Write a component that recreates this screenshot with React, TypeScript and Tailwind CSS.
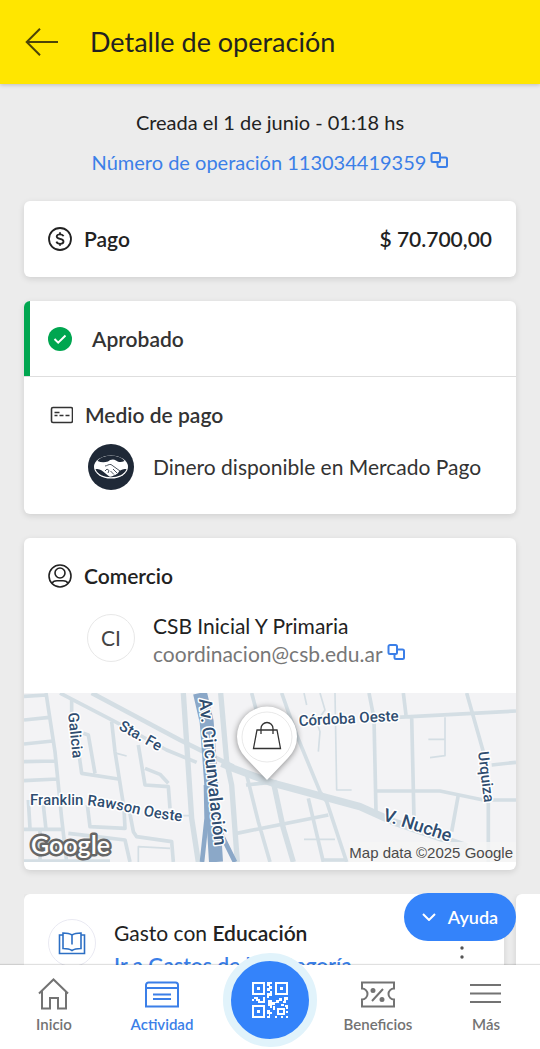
import type { ReactNode } from "react";

const copyIcon = (
  <svg viewBox="0 0 18 16" className="h-4 w-[18px]" fill="none" stroke="currentColor" strokeWidth="2">
    <path d="M7 10H3a1.500 1.500 0 0 1-1.500-1.500V2.500A1.500 1.500 0 0 1 3 1h5.500a1.500 1.500 0 0 1 1.500 1.500V8.500A1.500 1.500 0 0 1 8.500 10Z" />
    <path d="M11 5.500H15.500a1.500 1.500 0 0 1 1.500 1.500V13.500a1.500 1.500 0 0 1-1.500 1.500H9A1.500 1.500 0 0 1 7.500 13.500V10" />
  </svg>
);

function Card({ children, className = "" }: { children?: ReactNode; className?: string }) {
  return (
    <section className={`overflow-hidden rounded-md bg-white shadow-[0_2px_6px_rgba(0,0,0,0.12)] ${className}`}>
      {children}
    </section>
  );
}

function StreetMap() {
  return (
    <svg viewBox="24 8 492 169" className="block w-full" role="img" aria-label="Mapa del comercio">
      <defs>
        <path id="franklin" d="M30 120 L84 120 Q108 122 132 128 Q155 134 190 137" />
      </defs>
      <rect x="24" y="8" width="492" height="169" fill="#f3f3f5" />

      <g transform="scale(0.33333)" fill="none" stroke="#d4dee4" strokeWidth="11" strokeLinejoin="round">
        {/* west blocks */}
        <path d="M138 24L165 200L185 400L200 531M72 34L140 30M72 105L148 97M72 177L158 168M72 230L165 228M72 287L172 282M72 433L190 433" />
        <path d="M85 345L90 430M130 360L138 433M120 433V531M72 528H330M215 45V100M238 215L245 265L355 282M250 145L265 150L285 265" />
        <path d="M335 110L345 200L372 370L375 430L270 425L262 360M415 180L435 300L505 305L510 370M435 250L480 268L505 295" />
        <path d="M385 360L400 440L410 455L515 470L520 531M290 455L375 465L390 531M205 445L290 455" />
        <path d="M350 205L380 213M415 531V485L510 490M540 392H575M912 463H1005" strokeWidth="5" />
        {/* avenues */}
        <path d="M180 24L345 110L500 195L590 232" />
        <path d="M275 24L540 165L640 215L700 245" strokeWidth="14" />
        <path d="M665 235L700 250L820 295L1080 365L1180 410L1400 485" strokeWidth="22" />
        <path d="M550 24L575 400L595 531M662 24L680 230L695 300L712 531" strokeWidth="16" />
        {/* centre and east */}
        <path d="M755 24L770 80M845 24L870 95L890 150L960 320L980 350L1040 531M740 270L775 410L810 531M738 300L830 290M710 445L985 390M925 340L970 531M970 525H1040" />
        <path d="M822 300L850 430L880 531" strokeWidth="16" />
        <path d="M912 24L920 60M960 24L975 75L950 110L960 140L955 200M1005 24L1010 315H1055M1335 97V212L1290 218M1285 163H1335" strokeWidth="5" />
        <path d="M1190 97L1548 78M1107 24L1122 100L1128 380M1210 24L1218 90M1235 95L1242 400M1130 318H1320L1450 345L1548 345" />
        <path d="M1400 24L1450 200M1465 350V531M1475 240L1548 232M1375 330L1355 440" />
        {/* motorway */}
        <path d="M600 24L620 110L634 300L648 531" stroke="#8ba8c8" strokeWidth="42" />
        <path d="M618 300L620 400L606 531M650 380L665 450L705 531" stroke="#8ba8c8" strokeWidth="14" />
      </g>

      <g
        className="font-['Roboto',sans-serif] font-medium"
        fill="#2f4d70"
        stroke="#ffffff"
        strokeWidth="3"
        strokeLinejoin="round"
        paintOrder="stroke"
        fontSize="15"
      >
        <text transform="translate(68 28) rotate(84)">Galicia</text>
        <text transform="translate(118 44) rotate(29)">Sta. Fe</text>
        <text>
          <textPath href="#franklin">Franklin Rawson Oeste</textPath>
        </text>
        <text transform="translate(299 41) rotate(-3)">Córdoba Oeste</text>
        <text transform="translate(478 67) rotate(83)">Urquiza</text>
        <text transform="translate(382 135) rotate(18)" fontSize="18">V. Nuche</text>
        <text transform="translate(199 14) rotate(84)" fontSize="18">Av. Circunvalación</text>
      </g>

      <rect x="349" y="157" width="167" height="20" fill="#f5f5f5" fillOpacity="0.8" />
      <text x="513" y="173" textAnchor="end" fontSize="15" fill="#4a4a4a" className="font-['Liberation_Sans',sans-serif]">
        Map data ©2025 Google
      </text>
      <text
        x="31"
        y="169"
        fontSize="25"
        fill="#fff"
        stroke="#666"
        strokeWidth="5"
        strokeLinejoin="round"
        paintOrder="stroke"
        className="font-['Lato',sans-serif] font-semibold"
      >
        Google
      </text>

      {/* pin */}
      <path
        d="M267 95L246 73A30 30 0 1 1 288 73Z"
        fill="#fff"
        className="drop-shadow-[0_1px_3px_rgba(0,0,0,0.45)]"
      />
      <circle cx="267" cy="52" r="25" fill="none" stroke="#e9e9e9" />
      <path
        d="M257 45H277L280.500 63.500H253.500ZM261 49V43.500a6 6 0 0 1 12 0V49"
        fill="none"
        stroke="#333"
        strokeWidth="1.300"
      />
    </svg>
  );
}

function NavItem({ label, active, children }: { label: string; active?: boolean; children: ReactNode }) {
  return (
    <a
      href="#"
      className={`flex flex-1 flex-col items-center gap-[3px] pt-3 text-[15px] leading-5 font-semibold ${active ? "text-[#3b7fe8]" : "text-[#737373]"}`}
    >
      <svg viewBox="0 0 36 34" className="h-[34px] w-9" fill="none" stroke="currentColor" strokeWidth="2">
        {children}
      </svg>
      {label}
    </a>
  );
}

export default function App() {
  return (
    <div className="flex h-dvh flex-col bg-[#ececec] font-['Lato',sans-serif] text-[21px] leading-6 text-[#222]">
      <header className="z-10 flex h-[84px] shrink-0 items-center gap-8 bg-[#ffe600] px-6 shadow-[0_1px_4px_rgba(0,0,0,0.2)]">
        <button type="button" aria-label="Volver" className="text-[#4d4507]">
          <svg viewBox="0 0 34 28" className="h-7 w-[34px]" fill="none" stroke="currentColor" strokeWidth="2">
            <path d="M34 14H3M16 .7L2.700 14L16 27.300" />
          </svg>
        </button>
        <h1 className="text-[27px] leading-8">Detalle de operación</h1>
      </header>

      <div className="relative min-h-0 flex-1">
        <main className="flex h-full flex-col gap-6 overflow-x-hidden overflow-y-auto px-6 pt-[26px] [scrollbar-width:none] *:shrink-0">
          <div className="flex flex-col items-center gap-4 pb-[3px] text-xl leading-6">
            <p>Creada el 1 de junio - 01:18 hs</p>
            <a href="#" className="flex gap-1 text-[#3b7fe8]">
              Número de operación 113034419359
              <span className="pt-0.5">{copyIcon}</span>
            </a>
          </div>

          <Card className="flex h-[76px] items-center justify-between px-6 font-semibold">
            <h2 className="flex items-center gap-3">
              <svg viewBox="0 0 24 24" className="size-6" fill="none" stroke="currentColor" strokeWidth="1.800">
                <circle cx="12" cy="12" r="11" />
                <path d="M15.500 9.300C15 8 13.800 7.300 12 7.300c-2 0-3.300.9-3.300 2.300 0 3.200 6.800 1.500 6.800 4.900 0 1.400-1.400 2.300-3.400 2.300-1.900 0-3.200-.8-3.700-2.200M12 5.300v2M12 16.700v2" />
              </svg>
              Pago
            </h2>
            <p>$ 70.700,00</p>
          </Card>

          <Card>
            <div className="flex h-[76px] items-center gap-5 border-b border-[#dedede] pl-6 shadow-[inset_6px_0_0_#00a650]">
              <svg viewBox="0 0 24 24" className="size-6" fill="none">
                <circle cx="12" cy="12" r="12" fill="#00a650" />
                <path d="M6.500 12l3.700 3.700L17.500 8.500" stroke="#fff" strokeWidth="2" />
              </svg>
              <p className="font-semibold text-[#333]">Aprobado</p>
            </div>
            <div className="px-6 pt-[26px] pb-6 text-[#333]">
              <h2 className="flex items-center gap-3 font-semibold">
                <svg viewBox="0 0 25 24" className="h-6 w-[25px]" fill="none" stroke="currentColor" strokeWidth="1.600">
                  <rect x="3.500" y="4.500" width="21" height="15" rx="1.500" />
                  <path d="M6.500 9.500h5M6.500 12.500h3M11.500 12.500h4M17.500 12.500h4" />
                </svg>
                Medio de pago
              </h2>
              <div className="flex items-center gap-[19px] pt-[17px] pl-10">
                <svg viewBox="0 0 46 46" className="size-[46px]">
                  <circle cx="23" cy="23" r="23" fill="#1f2937" />
                  <ellipse cx="23" cy="23" rx="17" ry="11.500" fill="#fff" />
                  <path d="M9.500 17C14 10 32 10 36.500 17C33 18.500 31 18.500 28 16.500C25 14.500 22 16 20 17.500C16 18.800 13 18.500 9.500 17Z" fill="#1f2937" />
                  <path d="M7.500 25C10 25 13 25.500 15 27.500L20 31.500C22 33.500 24 32.500 25.500 31.500C28 31 30 29.500 31 27.500C33 25.500 36 25 38.500 25C35 36 11 36 7.500 25Z" fill="#1f2937" />
                  <path d="M17 22C19 22 20.500 20 23 20.500L32 27M25 25L29 29M22.500 27L26 30.500M17 27l2-2 2 1.500-1 2.500" fill="none" stroke="#1f2937" strokeWidth=".8" />
                </svg>
                <p>Dinero disponible en Mercado Pago</p>
              </div>
            </div>
          </Card>

          <Card className="pb-2">
            <div className="px-6 pt-[26px] pb-[25px]">
              <h2 className="flex items-center gap-3 font-semibold">
                <svg viewBox="0 0 24 24" className="size-6" fill="none" stroke="currentColor" strokeWidth="1.600">
                  <circle cx="12" cy="12" r="11" />
                  <circle cx="12" cy="9" r="5" />
                  <path d="M4 19.500C5 17 7 16.700 9 16.700h6c2 0 4 .3 5 2.800" />
                </svg>
                Comercio
              </h2>
              <div className="flex gap-[18px] pt-6 pl-[39px]">
                <div className="mt-0.5 flex size-12 items-center justify-center rounded-full border border-[#e8e8e8] text-[#444]">
                  CI
                </div>
                <div>
                  <p className="leading-7">CSB Inicial Y Primaria</p>
                  <p className="flex gap-1 leading-7 text-[#777]">
                    coordinacion@csb.edu.ar
                    <button type="button" aria-label="Copiar correo" className="self-start pt-1 text-[#3b7fe8]">
                      {copyIcon}
                    </button>
                  </p>
                </div>
              </div>
            </div>
            <StreetMap />
          </Card>

          <div className="-mr-6 flex gap-3 overflow-hidden">
            <Card className="flex h-[140px] w-[calc(100%-36px)] shrink-0 px-6 pt-[25px]">
              <div className="flex size-12 shrink-0 items-center justify-center rounded-full border border-[#e9e9f2]">
                <svg viewBox="0 0 28 24" className="h-6 w-7" fill="none" stroke="#2c6fc4" strokeWidth="1.600">
                  <path d="M5 4H1.500V22.500H26.500V4H23" />
                  <path d="M14 4C11 2 8 2 5 2V17.500C8 17.500 11 17.500 14 19.500C17 17.500 20 17.500 23 17.500V2C20 2 17 2 14 4ZM14 4V13.500" />
                </svg>
              </div>
              <div className="flex flex-col gap-2 pt-0.5 pl-[18px]">
                <p>
                  Gasto con <span className="font-semibold">Educación</span>
                </p>
                <a href="#" className="font-semibold text-[#3b7fe8]">
                  Ir a Gastos de la categoría
                </a>
              </div>
              <button type="button" aria-label="Más opciones" className="ml-auto self-start px-4 pt-4">
                <svg viewBox="0 0 4 24" className="h-6 w-1" fill="#555">
                  <circle cx="2" cy="4" r="1.700" />
                  <circle cx="2" cy="13" r="1.700" />
                  <circle cx="2" cy="22" r="1.700" />
                </svg>
              </button>
            </Card>
            <Card className="h-[140px] w-[calc(100%-36px)] shrink-0" />
          </div>
        </main>

        <button
          type="button"
          className="absolute right-6 bottom-6 flex h-12 w-28 items-center justify-center gap-3 rounded-full bg-[#3483fa] text-lg font-semibold text-white"
        >
          <svg viewBox="0 0 14 8" className="h-2 w-3.5" fill="none" stroke="currentColor" strokeWidth="2">
            <path d="M1 1l6 6 6-6" />
          </svg>
          Ayuda
        </button>
      </div>

      <nav className="relative flex h-[84px] shrink-0 bg-white shadow-[0_-1px_1px_rgba(0,0,0,0.12)]">
        <NavItem label="Inicio">
          <path d="M3 16.500L17.500 2.500L32 16.500M6 14V31.500H14V21H22V31.500H30V14" />
        </NavItem>
        <NavItem label="Actividad" active>
          <path d="M2 29.500V8a2.500 2.500 0 0 1 2.500-2.500h27A2.500 2.500 0 0 1 34 8V29.500ZM2 11H34M9 17.500H27M9 22H27" />
        </NavItem>
        <div className="flex flex-1 justify-center">
          <button
            type="button"
            aria-label="Pagar con QR"
            className="-mt-3 flex size-[94px] shrink-0 items-center justify-center rounded-full border-8 border-[#e1f3fb] bg-[#3483fa]"
          >
            <svg viewBox="0 0 36 36" className="size-9" fill="#fff">
              <path d="M0 0h13v13H0zM2 2v9h9V2zM5 5h3v3H5z" fillRule="evenodd" />
              <path d="M23 0h13v13H23zM25 2v9h9V2zM28 5h3v3h-3z" fillRule="evenodd" />
              <path d="M0 23h13v13H0zM2 25v9h9v-9zM5 28h3v3H5z" fillRule="evenodd" />
              <path d="M15 0h5v2h-2v2h2v3h-2v2h-3V6h2V4h-2zM15 11h3v-2h2v5h-3v2h-2zM0 17h2v2H0zM2 15h4v2h2v2h3v-4h2v6H6v-2H4v-2H2zM16 18h4v2h4v-2h3v-2h3v3h-3v2h-4v2h-3v3h-2v-2h-2zM32 15h4v3h-2v3h-3v-2h1zM15 28h3v2h2v2h-2v4h-3v-2h2v-2h-2zM21 24h2v4h-2zM29 22h3v2h-3zM33 23h3v4h-2v-2h-1zM34 34h2v2h-2zM34 29h2v2h-2zM23 34h2v2h-2zM29 34h2v2h-2z" />
              <path d="M25 26h8v7h-8zM27 28v3h4v-3z" fillRule="evenodd" />
            </svg>
          </button>
        </div>
        <NavItem label="Beneficios">
          <path d="M2 5.500H34V11.500A5.500 5.500 0 0 0 34 22.500V29.500H2V22.500A5.500 5.500 0 0 0 2 11.500ZM12 24L23 12" />
          <circle cx="13" cy="13.500" r="1.500" fill="currentColor" />
          <circle cx="22" cy="22.500" r="1.500" fill="currentColor" />
        </NavItem>
        <NavItem label="Más">
          <path d="M2 8H33M2 16.500H33M2 25H33" />
        </NavItem>
      </nav>
    </div>
  );
}
